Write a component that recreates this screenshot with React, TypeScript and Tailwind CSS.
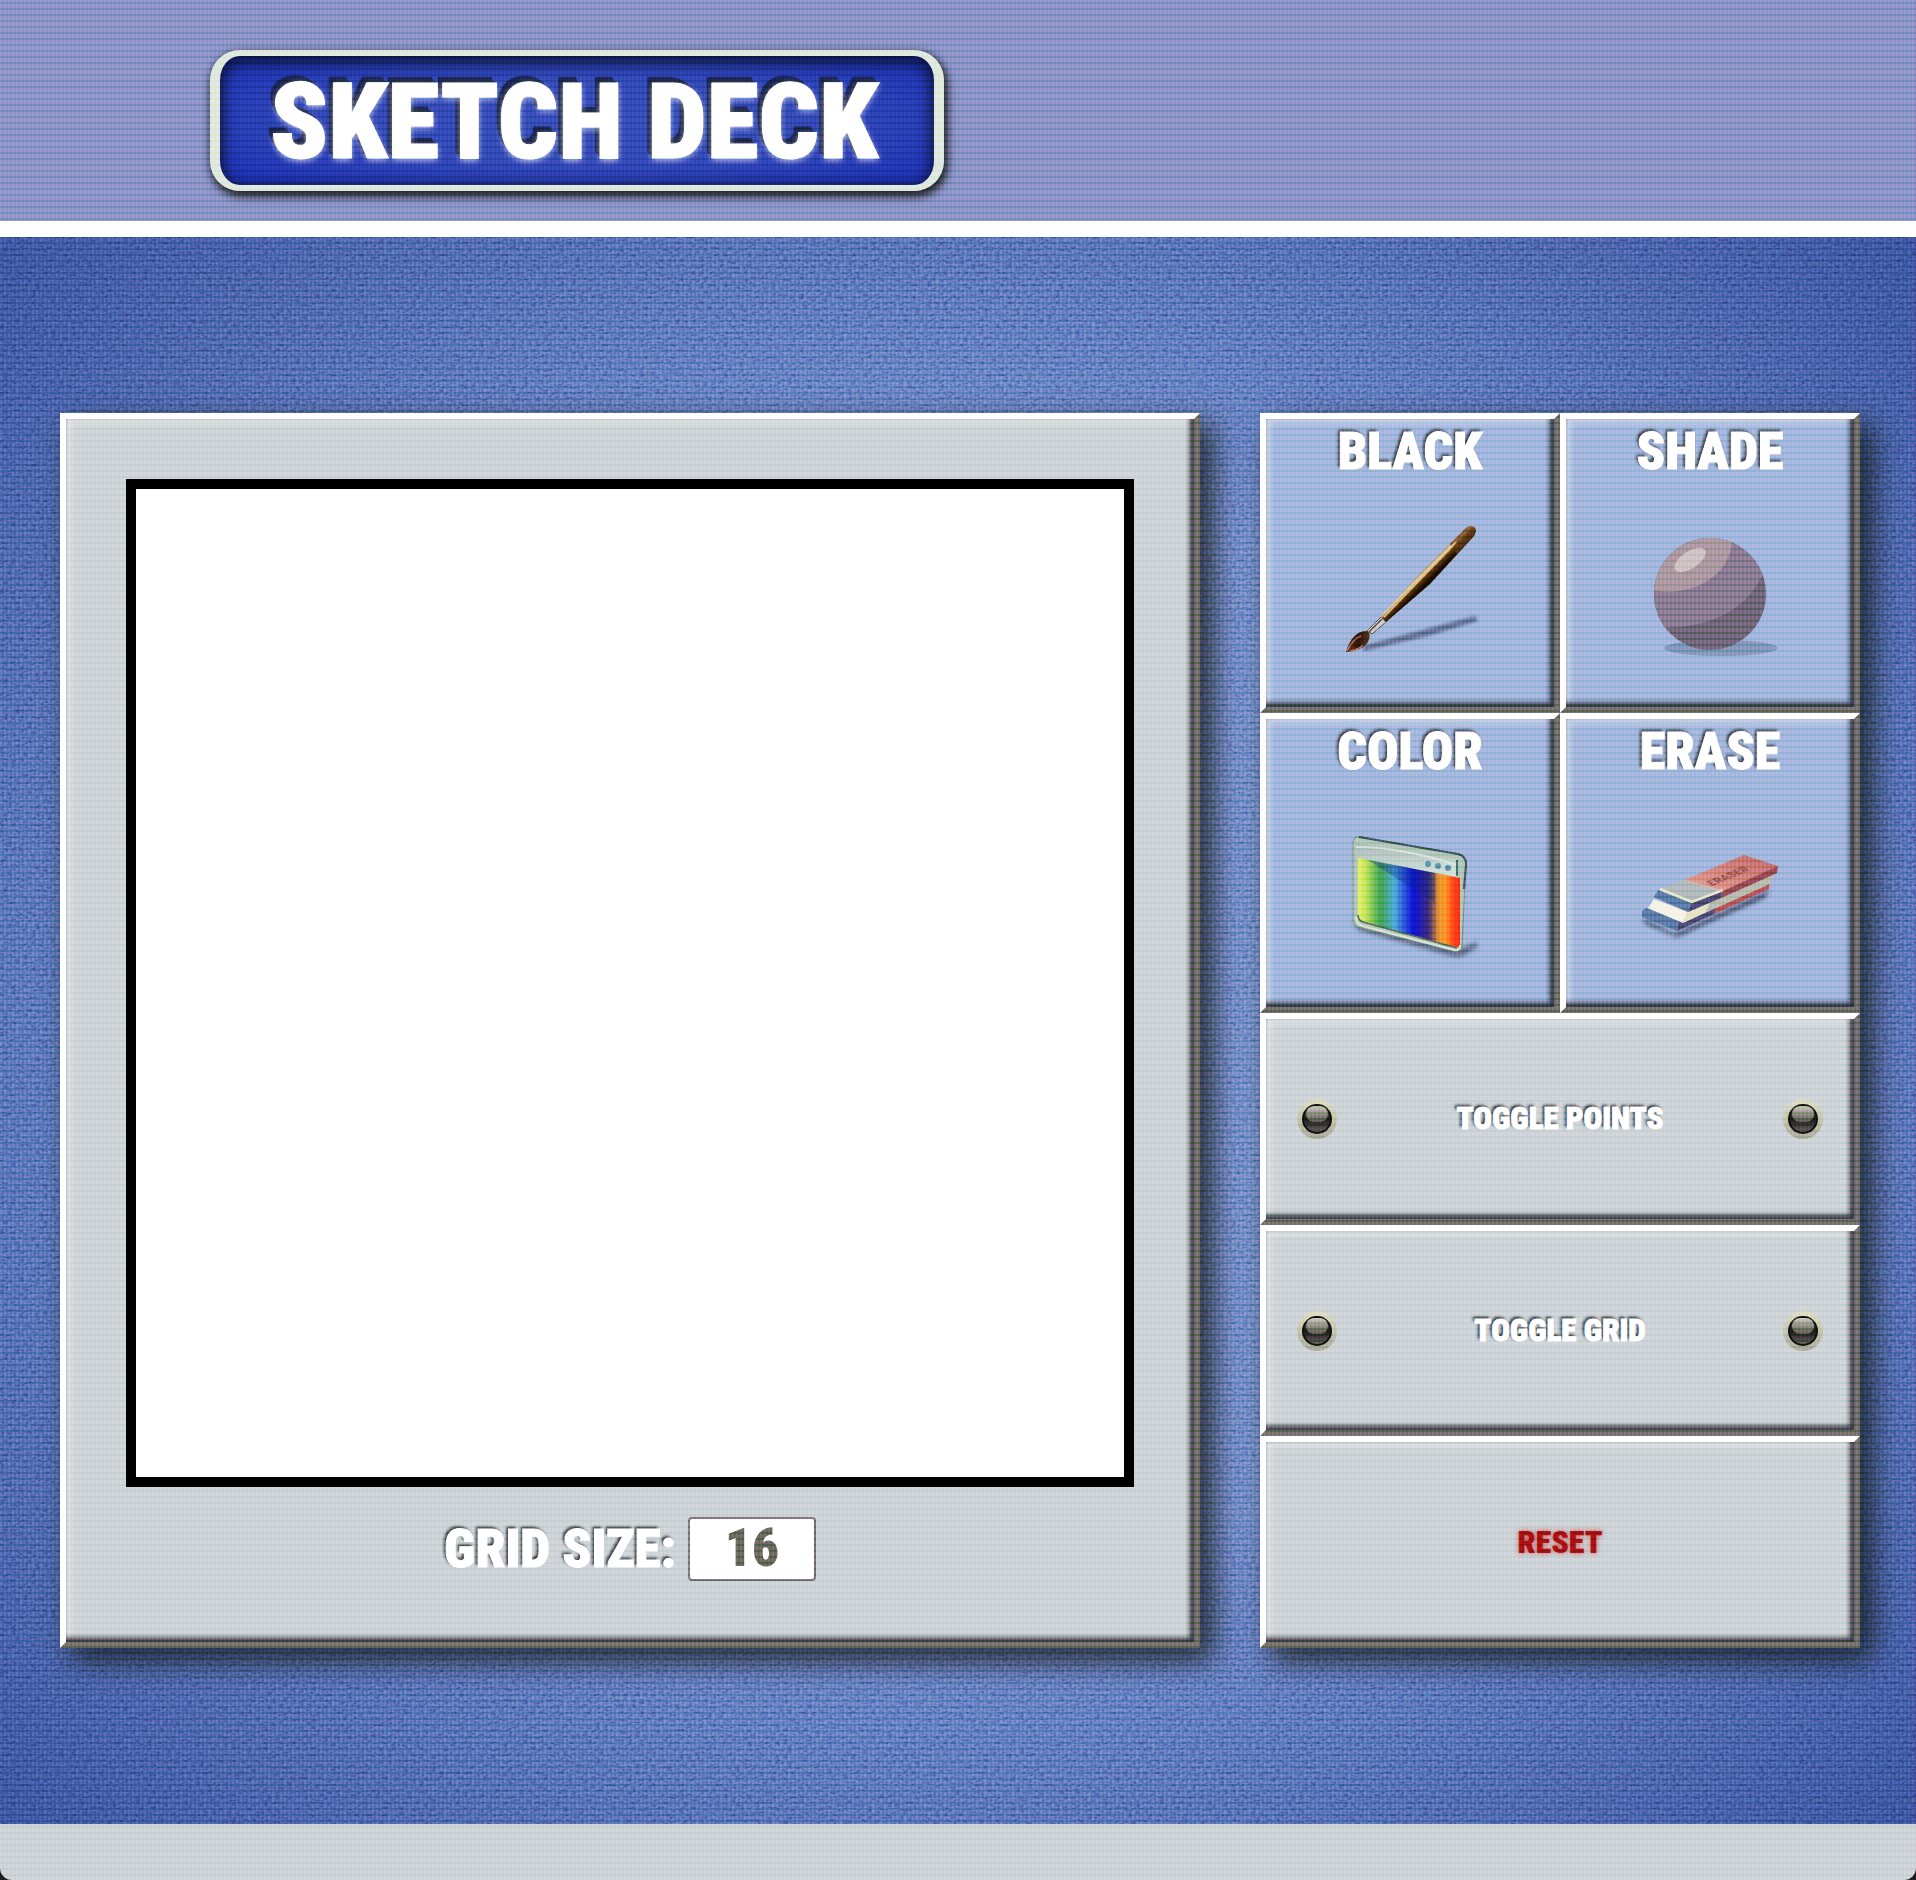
import { useState } from "react";
import type { ReactNode } from "react";

const bevel =
  "border-[6px] border-t-white border-l-white border-r-[#7d7d7d] border-b-[#7d7d7d] shadow-[inset_-3px_-3px_5px_1px_#10142acc,inset_3px_3px_6px_#ffffffaa]";
const label = "text-white font-black [-webkit-text-stroke:1px_#fff] [text-shadow:-2px_-2px_3px_#3c4050]";

function BrushIcon() {
  return (
    <svg viewBox="80 110 160 160" className="size-40" aria-hidden="true">
      <defs>
        <linearGradient id="handle" gradientUnits="userSpaceOnUse" x1="171" y1="170" x2="183" y2="182">
          <stop offset="0" stopColor="#6b4a2a" />
          <stop offset="0.3" stopColor="#f0dcb4" />
          <stop offset="0.5" stopColor="#6b3e10" />
          <stop offset="0.8" stopColor="#1c0f02" />
        </linearGradient>
        <linearGradient id="tip" x1="0" y1="0" x2="1" y2="0">
          <stop offset="0" stopColor="#7a3f28" />
          <stop offset="0.5" stopColor="#32160c" />
          <stop offset="1" stopColor="#633b24" />
        </linearGradient>
        <filter id="soft"><feGaussianBlur stdDeviation="1.6" /></filter>
      </defs>
      <path d="M112 247L165 233L225 217L228 222L178 237L114 252Z" fill="#46557c" opacity=".6" filter="url(#soft)" />
      <path d="M131 217L170 175L216 129Q221 125 225 129Q227 133 223 138L180 185L136 223Z" fill="url(#handle)" />
      <path d="M200 145L216 129Q221 125 225 129Q227 133 223 138L207 155Z" fill="#70431a" opacity=".7" />
      <path d="M131 218L136 223L122 235L117 232Z" fill="#d8d2d2" stroke="#6a6468" strokeWidth="1" />
      <path d="M132 220L119 233" stroke="#5e5a60" strokeWidth="1.5" />
      <path d="M96 253Q102 232 117 232Q122 235 118 243Q112 252 96 253Z" fill="url(#tip)" />
      <path d="M97 252Q103 240 111 237M100 252Q108 251 113 246" stroke="#c88d7c" strokeWidth="1.3" fill="none" />
      <path d="M206 143L134 218" stroke="#e6d0a6" strokeWidth="2" opacity=".85" />
    </svg>
  );
}

function SphereIcon() {
  return (
    <svg viewBox="80 110 160 160" className="size-40" aria-hidden="true">
      <defs><clipPath id="ball"><circle cx="160" cy="195" r="56" /></clipPath></defs>
      <ellipse cx="171" cy="249" rx="57" ry="8" fill="#8ca2c4" />
      <g clipPath="url(#ball)">
        <rect x="100" y="135" width="120" height="120" fill="#7c728c" />
        <path d="M100 229Q185 232 212 177L216 130H100Z" fill="#9488a3" />
        <path d="M100 191Q125 196 148 187Q178 173 182 145L175 130H100Z" fill="#b3a2ae" />
      </g>
      <ellipse cx="140" cy="161" rx="18" ry="8.500" transform="rotate(-33 140 161)" fill="#d3c9cc" />
    </svg>
  );
}

function SpectrumIcon() {
  return (
    <svg viewBox="80 110 160 160" className="size-40" aria-hidden="true">
      <defs>
        <linearGradient id="spectrum">
          <stop offset="0" stopColor="#ebf383" />
          <stop offset=".08" stopColor="#c5e56c" />
          <stop offset=".22" stopColor="#48ad67" />
          <stop offset=".36" stopColor="#55b5df" />
          <stop offset=".54" stopColor="#1014df" />
          <stop offset=".69" stopColor="#453090" />
          <stop offset=".79" stopColor="#eaa03f" />
          <stop offset=".86" stopColor="#ffa12b" />
          <stop offset=".94" stopColor="#ff4a20" />
          <stop offset="1" stopColor="#f83518" />
        </linearGradient>
        <linearGradient id="bar" x1="0" y1="0" x2="0.1" y2="1">
          <stop offset="0" stopColor="#aebfc2" />
          <stop offset="1" stopColor="#d8e6e0" />
        </linearGradient>
        <filter id="drop"><feGaussianBlur stdDeviation="2" /></filter>
      </defs>
      <path d="M103 221L207 251L227 243V248L213 257Q205 259 198 256L108 231Z" fill="#53627e" opacity=".75" filter="url(#drop)" />
      <path d="M103 144Q103 137 110 138L208 155Q216 157 216 165L212 247Q211 254 204 252L108 228Q103 226 103 220Z" fill="#b9ccc3" stroke="#829a97" strokeWidth="1" />
      <path d="M109 138L208 155Q216 157 216 165L214 190" fill="none" stroke="#41606a" strokeWidth="2" />
      <path d="M106 144L208 161V178L106 158Z" fill="url(#bar)" />
      <path d="M106 148Q150 148 207 166" fill="none" stroke="#e9f1e9" strokeWidth="2" opacity=".7" />
      <path d="M108 159L210 179V249L113 223Q108 221 108 215Z" fill="url(#spectrum)" />
      <path d="M118 161L185 174V204Z" fill="#052995" opacity=".3" />
      <path d="M108 216Q108 221 113 223L207 249" fill="none" stroke="#60776f" strokeWidth="1.500" />
      <path d="M106 218Q107 226 113 227L204 251Q210 252 210 246" fill="none" stroke="#dbe8dc" strokeWidth="2" />
      <g fill="#5f9fba"><circle cx="178" cy="165" r="3" /><circle cx="188" cy="167" r="3" /><circle cx="198" cy="169" r="3" /></g>
      <path d="M207 161V177" stroke="#46777e" strokeWidth="2" />
    </svg>
  );
}

function EraserIcon() {
  return (
    <svg viewBox="80 110 160 160" className="size-40" aria-hidden="true">
      <defs>
        <filter id="under"><feGaussianBlur stdDeviation="2" /></filter>
        <linearGradient id="pink" x1="0" y1="1" x2="1" y2="0">
          <stop offset="0" stopColor="#e6aaa4" />
          <stop offset="1" stopColor="#c4767c" />
        </linearGradient>
      </defs>
      <path d="M92 219L125 235L220 191L214 199L127 238L96 225Z" fill="#33405e" opacity=".8" filter="url(#under)" />
      <path d="M96 209L129 222L127 232L92 218V212Z" fill="#6488b4" />
      <path d="M129 222L166 207L164 215L127 232Z" fill="#56538a" />
      <path d="M166 204L220 180L219 190L164 215Z" fill="#bd5e6b" />
      <path d="M104 200L138 213L133 224L98 209Z" fill="#f6f4e9" />
      <path d="M138 213L224 175L220 185L133 224Z" fill="#bfc3bb" />
      <path d="M138 213L160 203L156 213L133 224Z" fill="#e9e5cf" />
      <path d="M108 191L142 204L138 213L104 198Z" fill="#6488b4" />
      <path d="M142 203L173 190L171 199L138 213Z" fill="#56538a" />
      <path d="M173 190L228 167L227 174L171 199Z" fill="#a25265" />
      <path d="M134 181L194 156L228 167L173 192Z" fill="url(#pink)" />
      <path d="M110 190L134 181L173 192L142 203Z" fill="#b9c0c6" />
      <path d="M110 190L142 203L173 191" fill="none" stroke="#e9ebcf" strokeWidth="2.500" />
      <path d="M134 181L173 192" stroke="#e1c2b0" strokeWidth="1" />
      <text x="0" y="0" transform="matrix(.91 -.38 .7 .45 162 187)" fontSize="13" fontWeight="700" fill="#a05a64" fontFamily="Roboto Condensed">ERASER</text>
    </svg>
  );
}

function ToolButton({ name, children }: { name: string; children: ReactNode }) {
  return (
    <button className={`${bevel} flex aspect-square flex-col items-center bg-[#abbee2] pt-1.5`}>
      <span className={`${label} text-[52px] leading-[54px]`}>{name}</span>
      <span className="mt-[30px]">{children}</span>
    </button>
  );
}

function Led() {
  return (
    <span className="grid size-10 place-items-center rounded-full bg-linear-to-b from-[#e2e2cc] to-[#b2b3a9]">
      <span className="flex size-[30px] justify-center rounded-full border-2 border-[#121214] bg-linear-to-b from-[#777] via-[#1c1c1e] to-[#6d6d6d]">
        <span className="h-4 w-[22px] rounded-full bg-linear-to-b from-[#cfd0c8] to-[#63635f]" />
      </span>
    </span>
  );
}

function ToggleButton({ name }: { name: string }) {
  return (
    <button className={`${bevel} flex flex-1 items-center justify-between bg-[#d2d8dd] px-[31px]`}>
      <Led />
      <span className={`${label} text-[31px] leading-8`}>{name}</span>
      <Led />
    </button>
  );
}

export default function App() {
  const [size, setSize] = useState("16");
  return (
    <div className="relative isolate overflow-hidden bg-[#202126] font-['Roboto_Condensed','Liberation_Sans',sans-serif]">
      <header className="flex border-b-[16px] border-white bg-[#959fcf] pt-[50px] pb-[30px] pl-[210px]">
        <div className="rounded-[30px] border-x-[10px] border-y-[6px] border-[#e2ebe2] bg-[radial-gradient(ellipse_at_center,#3d57c4_0%,#3852c0_45%,#2238bd_90%)] pt-1 pr-14 pl-[50px] shadow-[2px_4px_8px_1px_#10131ff0,inset_0_4px_14px_3px_#080d3ad0]">
          <h1 className="text-[106px] leading-[125px] font-black text-white [-webkit-text-stroke:1px_#fff] [text-shadow:0_2px_6px_#ffffffcc,-2px_-2px_0_#1b285f,-4px_-4px_0_#1b285f,-5px_-6px_1px_#1b285f]">
            SKETCH DECK
          </h1>
        </div>
      </header>

      <main className="relative isolate grid grid-cols-[19fr_10fr] gap-[60px] bg-[radial-gradient(ellipse_at_center,#7f99d2_0%,#7a95d0_48%,#5f7cc0_72%,#415dac_100%)] py-44 pr-14 pl-[60px]">
        <svg className="absolute inset-0 -z-10 size-full opacity-20 mix-blend-overlay" aria-hidden="true">
          <filter id="denim">
            <feTurbulence type="fractalNoise" baseFrequency="0.25 0.4" numOctaves="2" />
            <feColorMatrix values="2 0 0 0 -.6  2 0 0 0 -.6  2 0 0 0 -.6  0 0 0 0 1" />
          </filter>
          <rect width="100%" height="100%" filter="url(#denim)" />
        </svg>

        <section className={`${bevel} bg-[#d2d8dd] px-[60px] pt-[60px] pb-[61px] [filter:drop-shadow(12px_12px_15px_#0b1020c0)]`}>
          <div className="aspect-square border-[10px] border-black bg-white" />
          <div className="mt-[30px] flex items-center justify-center gap-3">
            <label htmlFor="grid-size" className={`${label} text-[53px] leading-[64px]`}>
              GRID SIZE:
            </label>
            <input
              id="grid-size"
              value={size}
              onChange={(e) => setSize(e.target.value)}
              className="h-16 w-32 rounded-[4px] border-2 border-[#85828a] bg-white text-center text-[53px] font-black text-[#74746f]"
            />
          </div>
        </section>

        <section className="flex flex-col [filter:drop-shadow(12px_12px_15px_#0b1020c0)]">
          <div className="grid grid-cols-2">
            <ToolButton name="BLACK"><BrushIcon /></ToolButton>
            <ToolButton name="SHADE"><SphereIcon /></ToolButton>
            <ToolButton name="COLOR"><SpectrumIcon /></ToolButton>
            <ToolButton name="ERASE"><EraserIcon /></ToolButton>
          </div>
          <ToggleButton name="TOGGLE POINTS" />
          <ToggleButton name="TOGGLE GRID" />
          <button className={`${bevel} flex-1 bg-[#d2d8dd] text-[32px] leading-8 font-black text-[#b01217] [text-shadow:0_0_5px_#d04048cc]`}>
            RESET
          </button>
        </section>
      </main>

      <footer className="h-14 rounded-b-[12px] bg-[#d2d8dd]" />

      <div className="pointer-events-none absolute inset-0 bg-[repeating-linear-gradient(0deg,transparent_0_4px,#20501860_4px_6px),repeating-linear-gradient(90deg,transparent_0_2px,#70302840_2px_4px)] mix-blend-overlay" />
    </div>
  );
}
